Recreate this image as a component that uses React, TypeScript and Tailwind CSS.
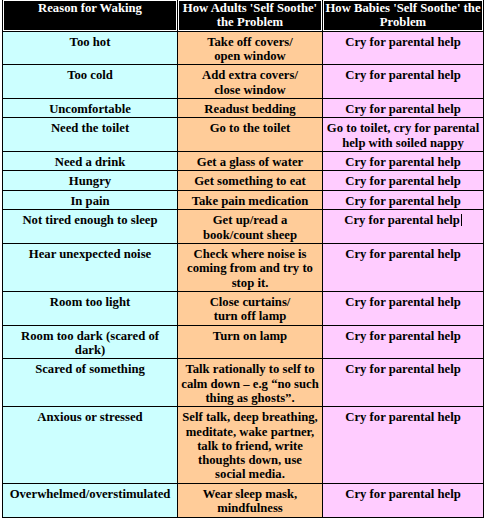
const headers = [
  ["Reason for Waking"],
  ["How Adults 'Self Soothe'", "the Problem"],
  ["How Babies 'Self Soothe' the", "Problem"],
];

const CRY = ["Cry for parental help"];

const rows: { reason: string[]; adult: string[]; baby: string[]; caret?: boolean }[] = [
  { reason: ["Too hot"], adult: ["Take off covers/", "open window"], baby: CRY },
  { reason: ["Too cold"], adult: ["Add extra covers/", "close window"], baby: CRY },
  { reason: ["Uncomfortable"], adult: ["Readust bedding"], baby: CRY },
  {
    reason: ["Need the toilet"],
    adult: ["Go to the toilet"],
    baby: ["Go to toilet, cry for parental", "help with soiled nappy"],
  },
  { reason: ["Need a drink"], adult: ["Get a glass of water"], baby: CRY },
  { reason: ["Hungry"], adult: ["Get something to eat"], baby: CRY },
  { reason: ["In pain"], adult: ["Take pain medication"], baby: CRY },
  {
    reason: ["Not tired enough to sleep"],
    adult: ["Get up/read a", "book/count sheep"],
    baby: CRY,
    caret: true,
  },
  {
    reason: ["Hear unexpected noise"],
    adult: ["Check where noise is", "coming from and try to", "stop it."],
    baby: CRY,
  },
  { reason: ["Room too light"], adult: ["Close curtains/", "turn off lamp"], baby: CRY },
  { reason: ["Room too dark (scared of", "dark)"], adult: ["Turn on lamp"], baby: CRY },
  {
    reason: ["Scared of something"],
    adult: ["Talk rationally to self to", "calm down \u2013 e.g \u201cno such", "thing as ghosts\u201d."],
    baby: CRY,
  },
  {
    reason: ["Anxious or stressed"],
    adult: [
      "Self talk, deep breathing,",
      "meditate, wake partner,",
      "talk to friend, write",
      "thoughts down, use",
      "social media.",
    ],
    baby: CRY,
  },
  { reason: ["Overwhelmed/overstimulated"], adult: ["Wear sleep mask,", "mindfulness"], baby: CRY },
];

function Lines({ lines }: { lines: string[] }) {
  return (
    <>
      {lines.map((l, i) => (
        <div key={i} className="whitespace-nowrap">
          {l}
        </div>
      ))}
    </>
  );
}

export default function App() {
  return (
    <div className="min-h-screen bg-white font-['Liberation_Serif',serif] text-[12.7px] font-bold leading-[14.3px] text-black">
      <div className="ml-[2px] grid w-[482px] grid-cols-[174px_144px_160px] gap-px bg-black px-px pb-px">
        {/* Header */}
        {headers.map((h, i) => (
          <div key={i} className="bg-white p-px">
            <div className="h-full bg-black text-center text-white">
              <Lines lines={h} />
            </div>
          </div>
        ))}

        {/* Body */}
        {rows.map((r, i) => (
          <div key={i} className="contents">
            <div className="bg-[#ccffff] pt-[3px] pb-[1.1px] text-center">
              <Lines lines={r.reason} />
            </div>
            <div className="bg-[#ffcc99] pt-[3px] pb-[1.1px] text-center">
              <Lines lines={r.adult} />
            </div>
            <div className="bg-[#ffccff] pt-[3px] pb-[1.1px] text-center">
              {r.caret ? (
                <div className="whitespace-nowrap">
                  {r.baby[0]}
                  <span className="ml-px inline-block h-[12px] w-px bg-black align-[-2px]" />
                </div>
              ) : (
                <Lines lines={r.baby} />
              )}
            </div>
          </div>
        ))}
      </div>
    </div>
  );
}
